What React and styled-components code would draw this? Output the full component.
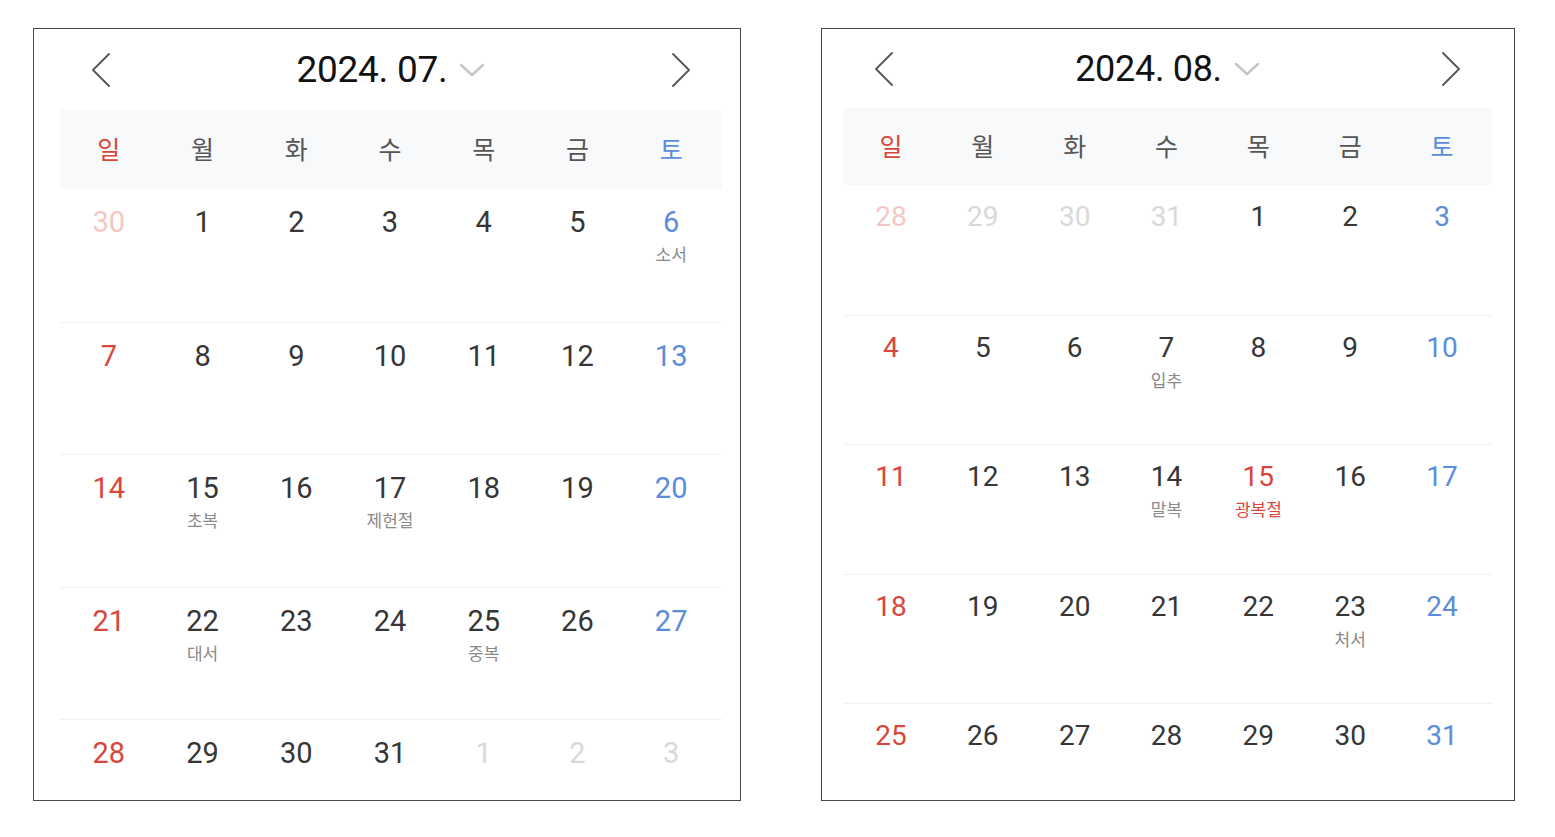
import React from "react";
import styled, { createGlobalStyle } from "styled-components";

const Global = createGlobalStyle`
  html, body { margin: 0; padding: 0; background: #ffffff; }
  body { font-family: Roboto, "Noto Sans CJK KR", sans-serif; }
`;

const RED = "#d8463c";
const BLUE = "#5b8ddb";

const Page = styled.div`
  display: flex;
  align-items: flex-start;
  gap: 80px;
  padding: 28px 0 0 33px;
`;

const Card = styled.section`
  width: ${(p) => p.$w}px;
  height: 773px;
  box-sizing: border-box;
  border: 1px solid #4a4a4a;
  background: #fff;
  overflow: hidden;
  padding: 0 ${(p) => p.$padR}px 0 ${(p) => p.$padL}px;
`;

const Header = styled.header`
  height: ${(p) => p.$h}px;
  display: flex;
  align-items: center;
  justify-content: space-between;
  padding: 0 32px;
`;

const NavButton = styled.button`
  width: 18px;
  height: 34px;
  padding: 0;
  border: none;
  background: none;
  display: flex;
  align-items: center;
  justify-content: center;
  cursor: pointer;
`;

const Title = styled.div`
  display: flex;
  align-items: center;
  gap: 12px;
  font-family: Roboto, sans-serif;
  font-size: ${(p) => p.$size}px;
  color: #121212;
  letter-spacing: -0.3px;
`;

const Grid = styled.div`
  display: grid;
  grid-template-columns: repeat(7, 1fr);
  padding: 0 ${(p) => p.$gr}px 0 ${(p) => p.$gl}px;
`;

const WeekBar = styled(Grid)`
  height: ${(p) => p.$h}px;
  box-sizing: border-box;
  padding-bottom: 4px;
  background: #f7f9fb;
  align-items: center;
`;

const WeekLabel = styled.div`
  text-align: center;
  font-family: "Noto Sans CJK KR", sans-serif;
  font-size: 25px;
  line-height: 30px;
  color: ${(p) => (p.$tone === "sun" ? RED : p.$tone === "sat" ? BLUE : "#555555")};
`;

const WeekRow = styled(Grid)`
  height: ${(p) => p.$h}px;
  box-sizing: border-box;
  border-top: ${(p) => (p.$first ? "none" : "1px solid #f1f1f1")};
`;

const Cell = styled.div`
  display: flex;
  flex-direction: column;
  align-items: center;
  padding-top: ${(p) => p.$pt}px;
`;

const dayColor = (tone, muted, holiday) => {
  if (muted) return tone === "sun" ? "#f2c8c4" : "#d9d9d9";
  if (holiday || tone === "sun") return RED;
  if (tone === "sat") return BLUE;
  return "#363636";
};

const DayNum = styled.div`
  font-family: Roboto, sans-serif;
  font-size: ${(p) => p.$size}px;
  line-height: 34px;
  height: 34px;
  color: ${(p) => dayColor(p.$tone, p.$muted, p.$holiday)};
`;

const Note = styled.div`
  margin-top: 5px;
  font-family: "Noto Sans CJK KR", sans-serif;
  font-size: 17px;
  line-height: 20px;
  color: ${(p) => (p.$holiday ? RED : "#8a8a8a")};
`;

const Chevron = ({ dir }) => (
  <svg width="18" height="34" viewBox="0 0 18 34" fill="none">
    <polyline
      points={dir === "left" ? "17,1 1,17 17,33" : "1,1 17,17 1,33"}
      stroke="#555"
      strokeWidth="1.8"
      strokeLinecap="round"
      strokeLinejoin="round"
    />
  </svg>
);

const Caret = () => (
  <svg width="26" height="14" viewBox="0 0 26 14" fill="none">
    <polyline points="2,2 13,12 24,2" stroke="#c4c4c4" strokeWidth="2.4" strokeLinecap="round" strokeLinejoin="round" />
  </svg>
);

const WEEKDAYS = ["일", "월", "화", "수", "목", "금", "토"];
const toneOf = (i) => (i === 0 ? "sun" : i === 6 ? "sat" : "day");

const JULY = [
  [{ d: 30, m: 1 }, { d: 1 }, { d: 2 }, { d: 3 }, { d: 4 }, { d: 5 }, { d: 6, n: "소서" }],
  [{ d: 7 }, { d: 8 }, { d: 9 }, { d: 10 }, { d: 11 }, { d: 12 }, { d: 13 }],
  [{ d: 14 }, { d: 15, n: "초복" }, { d: 16 }, { d: 17, n: "제헌절" }, { d: 18 }, { d: 19 }, { d: 20 }],
  [{ d: 21 }, { d: 22, n: "대서" }, { d: 23 }, { d: 24 }, { d: 25, n: "중복" }, { d: 26 }, { d: 27 }],
  [{ d: 28 }, { d: 29 }, { d: 30 }, { d: 31 }, { d: 1, m: 1 }, { d: 2, m: 1 }, { d: 3, m: 1 }],
];

const AUGUST = [
  [{ d: 28, m: 1 }, { d: 29, m: 1 }, { d: 30, m: 1 }, { d: 31, m: 1 }, { d: 1 }, { d: 2 }, { d: 3 }],
  [{ d: 4 }, { d: 5 }, { d: 6 }, { d: 7, n: "입추" }, { d: 8 }, { d: 9 }, { d: 10 }],
  [{ d: 11 }, { d: 12 }, { d: 13 }, { d: 14, n: "말복" }, { d: 15, n: "광복절", h: 1 }, { d: 16 }, { d: 17 }],
  [{ d: 18 }, { d: 19 }, { d: 20 }, { d: 21 }, { d: 22 }, { d: 23, n: "처서" }, { d: 24 }],
  [{ d: 25 }, { d: 26 }, { d: 27 }, { d: 28 }, { d: 29 }, { d: 30 }, { d: 31 }],
];

const Calendar = ({ title, weeks, cfg }) => (
  <Card $w={cfg.w} $padL={cfg.padL} $padR={cfg.padR}>
    <Header $h={cfg.headerH}>
      <NavButton aria-label="이전 달">
        <Chevron dir="left" />
      </NavButton>
      <Title $size={cfg.titleSize}>
        <span>{title}</span>
        <Caret />
      </Title>
      <NavButton aria-label="다음 달">
        <Chevron dir="right" />
      </NavButton>
    </Header>
    <WeekBar $h={cfg.weekH} $gl={cfg.gl} $gr={cfg.gr}>
      {WEEKDAYS.map((w, i) => (
        <WeekLabel key={w} $tone={toneOf(i)}>
          {w}
        </WeekLabel>
      ))}
    </WeekBar>
    {weeks.map((week, r) => (
      <WeekRow key={r} $first={r === 0} $h={cfg.rowH} $gl={cfg.gl} $gr={cfg.gr}>
        {week.map((c, i) => (
          <Cell key={i} $pt={cfg.cellPt}>
            <DayNum $size={cfg.numSize} $tone={toneOf(i)} $muted={!!c.m} $holiday={!!c.h}>
              {c.d}
            </DayNum>
            {c.n && <Note $holiday={!!c.h}>{c.n}</Note>}
          </Cell>
        ))}
      </WeekRow>
    ))}
  </Card>
);

const LEFT = { w: 708, padL: 26, padR: 18, headerH: 81, weekH: 79, rowH: 132.5, gl: 2, gr: 4, titleSize: 37, numSize: 29, cellPt: 16 };
const RIGHT = { w: 694, padL: 21, padR: 22, headerH: 79, weekH: 77, rowH: 129.5, gl: 2, gr: 4, titleSize: 36, numSize: 28, cellPt: 15 };

export default function App() {
  return (
    <>
      <Global />
      <Page>
        <Calendar title="2024. 07." weeks={JULY} cfg={LEFT} />
        <Calendar title="2024. 08." weeks={AUGUST} cfg={RIGHT} />
      </Page>
    </>
  );
}
